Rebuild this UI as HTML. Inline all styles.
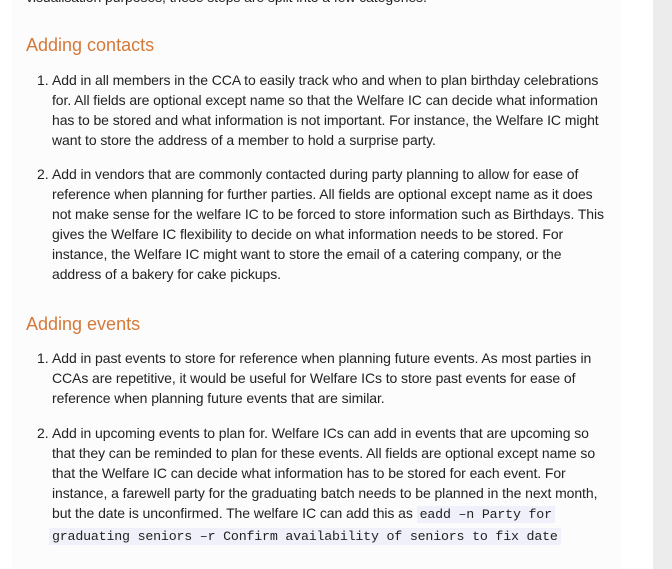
<!DOCTYPE html>
<html><head><style>
html,body{margin:0;padding:0;width:672px;height:569px;overflow:hidden;background:#fff;font-family:"Liberation Sans",sans-serif;}
.main{position:absolute;left:12px;top:0;width:610px;height:569px;background:#fcfcfc;}
.side{position:absolute;left:653px;top:0;width:19px;height:569px;background:#ececec;}
.t{position:absolute;left:52px;font-size:14px;letter-spacing:-0.08px;color:#222;white-space:nowrap;line-height:20px;}
.n{position:absolute;left:37px;font-size:14px;color:#222;line-height:20px;}
h2{position:absolute;left:26px;margin:0;font-weight:normal;font-size:18px;color:#d4793a;line-height:24px;}
code{font-family:"Liberation Mono",monospace;font-size:13.3px;background:#f0f0fa;padding:1px 3px;letter-spacing:-0.2px;}
</style></head><body>
<div class="main"></div><div class="side"></div>
<div class="t" style="left:26px;top:-13px">visualisation purposes, these steps are split into a few categories.</div>
<h2 style="top:33px">Adding contacts</h2>
<div class="n" style="top:70px">1.</div>
<div class="t" style="top:70px">Add in all members in the CCA to easily track who and when to plan birthday celebrations<br>for. All fields are optional except name so that the Welfare IC can decide what information<br>has to be stored and what information is not important. For instance, the Welfare IC might<br>want to store the address of a member to hold a surprise party.</div>
<div class="n" style="top:164px">2.</div>
<div class="t" style="top:164px">Add in vendors that are commonly contacted during party planning to allow for ease of<br>reference when planning for further parties. All fields are optional except name as it does<br>not make sense for the welfare IC to be forced to store information such as Birthdays. This<br>gives the Welfare IC flexibility to decide on what information needs to be stored. For<br>instance, the Welfare IC might want to store the email of a catering company, or the<br>address of a bakery for cake pickups.</div>
<h2 style="top:312px">Adding events</h2>
<div class="n" style="top:348px">1.</div>
<div class="t" style="top:348px">Add in past events to store for reference when planning future events. As most parties in<br>CCAs are repetitive, it would be useful for Welfare ICs to store past events for ease of<br>reference when planning future events that are similar.</div>
<div class="n" style="top:423px">2.</div>
<div class="t" style="top:423px">Add in upcoming events to plan for. Welfare ICs can add in events that are upcoming so<br>that they can be reminded to plan for these events. All fields are optional except name so<br>that the Welfare IC can decide what information has to be stored for each event. For<br>instance, a farewell party for the graduating batch needs to be planned in the next month,<br>but the date is unconfirmed. The welfare IC can add this as <code>eadd –n Party for</code><br><code style="margin-left:-3px">graduating seniors –r Confirm availability of seniors to fix date</code></div>
</body></html>
